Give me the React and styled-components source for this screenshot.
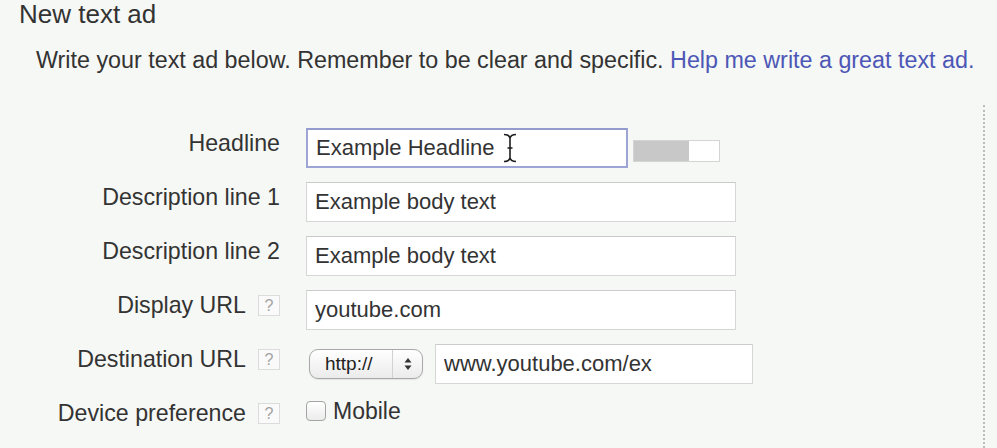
import { createGlobalStyle, styled } from "styled-components";

const GlobalStyle = createGlobalStyle`
  html, body {
    margin: 0;
    padding: 0;
    background: #f6f8f5;
  }
  body {
    font-family: "Liberation Sans", Arial, Helvetica, sans-serif;
    color: #333;
  }
`;

const Page = styled.div`
  height: 100vh;
  display: flex;
  flex-direction: column;
  overflow: hidden;
`;

const Title = styled.h1`
  margin: 0 0 0 19px;
  font-size: 26px;
  line-height: 28px;
  font-weight: normal;
  color: #333;
`;

const Intro = styled.p`
  margin: 18px 0 0 36px;
  font-size: 23.3px;
  line-height: 28px;
  color: #333;
  white-space: nowrap;
`;

const HelpLink = styled.a`
  color: #4d57b6;
  text-decoration: none;
`;

const Panel = styled.div`
  flex: 1;
  width: 985px;
  margin-top: 31px;
  padding-top: 23px;
  border-right: 2px dotted #b9bcb9;
  box-sizing: border-box;
`;

const Form = styled.div`
  display: grid;
  grid-template-columns: 280px auto;
  column-gap: 26px;
  row-gap: 14px;
  align-items: start;
`;

const Label = styled.div`
  justify-self: end;
  display: flex;
  align-items: center;
  gap: 12px;
  padding-top: 1px;
  font-size: 23.2px;
  line-height: 28px;
  color: #333;
  white-space: nowrap;
`;

const HelpBox = styled.span`
  width: 22px;
  height: 21px;
  box-sizing: border-box;
  border: 1px solid #dcdcdc;
  background: #fafafa;
  color: #a2a2a2;
  font-size: 16px;
  line-height: 19px;
  text-align: center;
`;

const Field = styled.div`
  display: flex;
  align-items: center;
  gap: ${({ $gap }) => $gap || 0}px;
  min-height: 26px;
`;

const InputWrap = styled.div`
  position: relative;
`;

const TextInput = styled.input`
  width: ${({ $w }) => $w}px;
  height: 40px;
  box-sizing: border-box;
  padding: 0 0 0 8px;
  border: ${({ $focus }) => ($focus ? "2px solid #9ea5d4" : "1px solid #d6d6d6")};
  border-top-color: ${({ $focus }) => ($focus ? "#949cce" : "#cbcbcb")};
  background: #fff;
  font-family: "Liberation Sans", Arial, sans-serif;
  font-size: 22px;
  color: #333;
  outline: none;
`;

const Cursor = styled.svg`
  position: absolute;
  left: 196px;
  top: 5px;
`;

const Counter = styled.div`
  width: 87px;
  height: 22px;
  margin-top: 5px;
  box-sizing: border-box;
  border: 1px solid #d4d4d4;
  background: #fff;
`;

const CounterFill = styled.div`
  height: 100%;
  background: #c7c8c7;
`;

const SelectBox = styled.div`
  display: flex;
  align-items: stretch;
  width: 114px;
  height: 30px;
  margin-left: 3px;
  box-sizing: border-box;
  border: 1px solid #a8a8a8;
  border-radius: 9px;
  background: linear-gradient(#ffffff, #ebebeb);
  box-shadow: 0 1px 1px rgba(0, 0, 0, 0.08);
`;

const SelectText = styled.span`
  width: 83px;
  padding-left: 15px;
  box-sizing: border-box;
  border-right: 1px solid #d2d2d2;
  font-size: 19px;
  line-height: 28px;
  color: #222;
`;

const SelectArrows = styled.span`
  flex: 1;
  display: flex;
  align-items: center;
  justify-content: center;
`;

const Check = styled.span`
  width: 20px;
  height: 20px;
  box-sizing: border-box;
  border: 1px solid #a4a4a4;
  border-radius: 4px;
  background: linear-gradient(#ffffff, #ececec);
`;

const CheckText = styled.span`
  margin-left: 7px;
  font-size: 23px;
  line-height: 26px;
  color: #333;
`;

const Help = () => <HelpBox>?</HelpBox>;

const App = () => {
  const used = 55;

  return (
    <Page>
      <GlobalStyle />
      <Title>New text ad</Title>
      <Intro>
        Write your text ad below. Remember to be clear and specific.{" "}
        <HelpLink href="#">Help me write a great text ad.</HelpLink>
      </Intro>
      <Panel>
        <Form>
          <Label>Headline</Label>
          <Field $gap={5}>
            <InputWrap>
              <TextInput $w={322} $focus readOnly value="Example Headline" />
              <Cursor width="16" height="30" viewBox="0 0 16 30">
                <path
                  d="M2 1.5 Q7 1.5 8 5 Q9 1.5 14 1.5 M8 5 V25 M2 28.5 Q7 28.5 8 25 Q9 28.5 14 28.5 M5.5 15 H10.5"
                  fill="none"
                  stroke="#1e1e1e"
                  strokeWidth="1.6"
                />
              </Cursor>
            </InputWrap>
            <Counter>
              <CounterFill style={{ width: `${used}px` }} />
            </Counter>
          </Field>

          <Label>Description line 1</Label>
          <Field>
            <TextInput $w={430} readOnly value="Example body text" />
          </Field>

          <Label>Description line 2</Label>
          <Field>
            <TextInput $w={430} readOnly value="Example body text" />
          </Field>

          <Label>
            Display URL <Help />
          </Label>
          <Field>
            <TextInput $w={430} readOnly value="youtube.com" />
          </Field>

          <Label>
            Destination URL <Help />
          </Label>
          <Field $gap={12}>
            <SelectBox>
              <SelectText>http://</SelectText>
              <SelectArrows>
                <svg width="8" height="14" viewBox="0 0 8 14">
                  <path d="M4 1 L7.5 5.5 H0.5 Z M4 13 L7.5 8.5 H0.5 Z" fill="#333" />
                </svg>
              </SelectArrows>
            </SelectBox>
            <TextInput $w={318} readOnly value="www.youtube.com/ex" />
          </Field>

          <Label>
            Device preference <Help />
          </Label>
          <Field>
            <Check />
            <CheckText>Mobile</CheckText>
          </Field>
        </Form>
      </Panel>
    </Page>
  );
};

export default App;
